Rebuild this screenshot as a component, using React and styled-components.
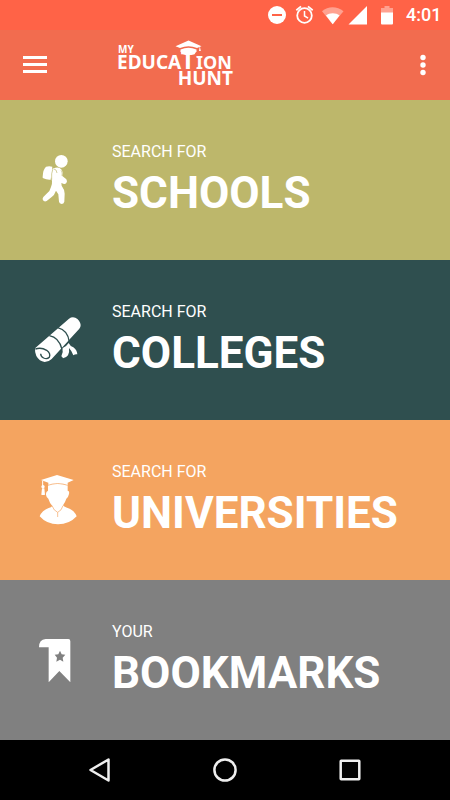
import React from 'react';
import styled, { createGlobalStyle } from 'styled-components';

const GlobalStyle = createGlobalStyle`
  * {
    box-sizing: border-box;
  }

  body {
    margin: 0;
    background-color: black;
    font-family: Roboto, "Liberation Sans", sans-serif;
  }
`;

const StatusIcons = () => (
  <svg width="136" height="30" viewBox="0 0 136 30" fill="white" aria-hidden="true">
    <circle cx="9" cy="15" r="9" />
    <rect x="4" y="14" width="10" height="2" fill="#ff6347" />

    <g fill="none" stroke="white" strokeWidth="1.8">
      <circle cx="36.500" cy="15.500" r="7.300" />
      <path d="M36.500 11v5l3.600 2.200" strokeWidth="1.500" />
      <path d="M28.300 10.200l4.700-3.800M44.700 10.200l-4.700-3.800" />
    </g>

    <path d="M54 11.200C60 5.900 69 5.900 75.500 11.200L64.700 24.300z" opacity="0.400" />
    <path d="M58 15.600C61.500 12.500 68 12.500 71.500 15.600L64.700 24.300z" />

    <path d="M99 6v18.600H80.500z" />

    <path d="M113 8h3.500V6h5v2h3.500v5h-12z" opacity="0.400" />
    <path d="M113 12.500h12v11a1 1 0 0 1-1 1h-10a1 1 0 0 1-1-1z" />
  </svg>
);

const Logo = () => (
  <svg width="124" height="58" viewBox="114 36 124 58" fill="white" role="img" aria-label="My Education Hunt">
    <g fontFamily="'Noto Sans', 'Open Sans', sans-serif" fontWeight="700">
      <text x="117" y="53" fontSize="10">MY</text>
      <text x="116" y="69" fontSize="19">EDUCA</text>
      <text x="187" y="69" fontSize="25" textAnchor="middle">T</text>
      <text x="195" y="69" fontSize="18">ION</text>
      <text x="232" y="85" fontSize="19" textAnchor="end">HUNT</text>
    </g>
    <path d="M174.500 46.200L187.500 40.500l13 5.700-4.500 1.800q-8.500-3.400-17 0z" />
    <path d="M179.500 49.400q8-3.200 16 0v2q-1.500 3-5 3.600h-6q-3.500-.6-5-3.600z" />
    <path d="M198.800 46l1 5h-1.800z" />
  </svg>
);

const StudentIcon = () => (
  <svg width="70" height="70" viewBox="0 15 210 210" fill="white" aria-hidden="true">
    <circle cx="109" cy="64" r="19" />
    <path d="M63 80q10-3 19 0l-5 39q-12 1-22-4-3-2-2-5 1-22 10-30z" />
    <path d="M86 85q10-5 18-1 9 5 9 14l-1 10 12 10q4 6 0 11-4 4-9 2l-6-2 1 8q9 12 9 24l-1 24q-2 7-8 7-7-1-8-7l-2-22-7-11q-5 14-13 19l-15 12q-7 3-11-2-3-5 1-10l12-12q8-6 11-18 4-10 3-18-4-11-4-22 0-12 8-16z" />
    <path d="M84 86q-6 14-4 33M87 87q8 1 9 12" fill="none" stroke="#bdb76b" strokeWidth="2" />
    <path d="M108 90q5 9 3 18" fill="none" stroke="#bdb76b" strokeWidth="1.500" />
  </svg>
);

const DiplomaIcon = () => (
  <svg width="70" height="70" viewBox="0 0 210 210" fill="white" aria-hidden="true">
    <path d="M30 130L132 41q9-7 19-3 14 7 16 22 0 7-4 11L80 162q-9 9-21 9-16-2-25-18-5-12-4-23z" />
    <path d="M112 130q12-5 19-16 4 9 14 13 11 8 12 21-7-1-12 3-5-14-13-22 2 11-3 22-6 8-15 9-2-4-5-6 7-12 3-24z" />
    <g fill="none" stroke="#2f4f4f" strokeWidth="4">
      <path d="M73 92q29 5 38 41" />
      <path d="M98 68q31 8 35 43" />
      <path d="M31 132q18-6 34 4 13 10 8 21-7 7-17 2-9-5-9-13" />
    </g>
  </svg>
);

const GraduateIcon = () => (
  <svg width="70" height="70" viewBox="0 0 210 210" fill="white" aria-hidden="true">
    <path d="M48 45L96 30l50 15-18 8v8q-30-9-58 0v-8l-12-4z" />
    <path d="M53 47v20" fill="none" stroke="white" strokeWidth="3" />
    <circle cx="54" cy="65" r="5" />
    <path d="M51 70h7l2 19q-6 2-11 0z" />
    <path d="M69 61q28-10 59 0v16q6 0 4 10-2 10-8 14-4 12-10 20 2 4 12 7 22 7 29 26-22 24-56 24t-55-24q7-18 27-25 8-2 11-6-8-9-12-22-6-4-7-12-1-9 6-12z" />
    <path d="M69 61q28-11 59 0" fill="none" stroke="#f4a460" strokeWidth="2" />
    <path d="M81 122q5 15 17 20 12-5 16-20M98 142v14" fill="none" stroke="#f4a460" strokeWidth="2" />
  </svg>
);

const BookmarkIcon = () => (
  <svg width="70" height="70" viewBox="0 0 210 210" fill="white" aria-hidden="true">
    <path d="M42 67q0-24 20-25h68q6 0 6 7v123l-33-34-32 34V67z" />
    <path d="M105 77l5 11 11 1-8 9 2 12-10-6-11 6 2-12-7-9 11-1z" fill="#808080" />
  </svg>
);

const sections = [
  { label: 'SEARCH FOR', title: 'SCHOOLS', color: '#bdb76b', Icon: StudentIcon },
  { label: 'SEARCH FOR', title: 'COLLEGES', color: '#2f4f4f', Icon: DiplomaIcon },
  { label: 'SEARCH FOR', title: 'UNIVERSITIES', color: '#f4a460', Icon: GraduateIcon },
  { label: 'YOUR', title: 'BOOKMARKS', color: '#808080', Icon: BookmarkIcon },
];

function App() {
  return (
    <Screen>
      <GlobalStyle />
      <StatusBar>
        <StatusIcons />
        <Clock>4:01</Clock>
      </StatusBar>
      <Toolbar>
        <IconButton aria-label="Open menu">
          <svg width="24" height="18" viewBox="0 0 24 18" fill="white">
            <rect width="24" height="3" />
            <rect y="7" width="24" height="3" />
            <rect y="14" width="24" height="3" />
          </svg>
        </IconButton>
        <Brand>
          <Logo />
        </Brand>
        <IconButton aria-label="More options">
          <svg width="6" height="22" viewBox="0 0 6 22" fill="white">
            <circle cx="3" cy="3.500" r="2.700" />
            <circle cx="3" cy="11" r="2.700" />
            <circle cx="3" cy="18.500" r="2.700" />
          </svg>
        </IconButton>
      </Toolbar>
      <Sections>
        {sections.map(({ label, title, color, Icon }) => (
          <Section key={title} href={`#${title.toLowerCase()}`} $color={color}>
            <Icon />
            <SectionText>
              <Label>{label}</Label>
              <Title>{title}</Title>
            </SectionText>
          </Section>
        ))}
      </Sections>
      <NavBar>
        <NavButton aria-label="Back">
          <svg width="26" height="26" viewBox="0 0 26 26">
            <path d="M21.500 2.500v21L3.500 13z" />
          </svg>
        </NavButton>
        <NavButton aria-label="Home">
          <svg width="26" height="26" viewBox="0 0 26 26">
            <circle cx="13" cy="13" r="10.600" />
          </svg>
        </NavButton>
        <NavButton aria-label="Recent apps">
          <svg width="26" height="26" viewBox="0 0 26 26">
            <rect x="3.700" y="3.700" width="18.600" height="18.600" rx="0.500" />
          </svg>
        </NavButton>
      </NavBar>
    </Screen>
  );
}

export default App;

const Screen = styled.div`
  display: flex;
  flex-direction: column;
  min-height: 100vh;
`;

const StatusBar = styled.div`
  display: flex;
  align-items: center;
  justify-content: flex-end;
  gap: 2px;
  height: 30px;
  padding-right: 10px;
  background-color: #ff6347;
`;

const Clock = styled.span`
  width: 34px;
  color: white;
  font-size: 18px;
  font-weight: 500;
  line-height: 30px;
  white-space: nowrap;
`;

const Toolbar = styled.header`
  display: flex;
  align-items: center;
  height: 70px;
  padding: 0 15px;
  background-color: #f26c4f;
`;

const IconButton = styled.button`
  display: flex;
  align-items: center;
  justify-content: center;
  min-width: 24px;
  height: 40px;
  padding: 0 8px;
  border: none;
  background: none;
  cursor: pointer;
`;

const Brand = styled.div`
  display: flex;
  flex: 1;
  padding-left: 60px;
`;

const Sections = styled.main`
  display: flex;
  flex: 1;
  flex-direction: column;
`;

const Section = styled.a`
  display: flex;
  flex: 1;
  align-items: center;
  gap: 17px;
  min-height: 120px;
  padding: 0 25px;
  background-color: ${(props) => props.$color};
  color: white;
  text-decoration: none;
`;

const SectionText = styled.div`
  display: flex;
  flex-direction: column;
  gap: 7px;
  padding-bottom: 1px;
`;

const Label = styled.span`
  font-size: 16px;
  line-height: 20px;
`;

const Title = styled.span`
  font-size: 44px;
  font-weight: 700;
  line-height: 48px;
`;

const NavBar = styled.nav`
  display: flex;
  align-items: center;
  justify-content: center;
  gap: 75px;
  height: 60px;
  background-color: black;
`;

const NavButton = styled.button`
  display: flex;
  align-items: center;
  justify-content: center;
  width: 50px;
  height: 50px;
  padding: 0;
  border: none;
  background: none;
  cursor: pointer;

  svg {
    fill: none;
    stroke: #eee;
    stroke-width: 2.5px;
    stroke-linejoin: round;
  }
`;
